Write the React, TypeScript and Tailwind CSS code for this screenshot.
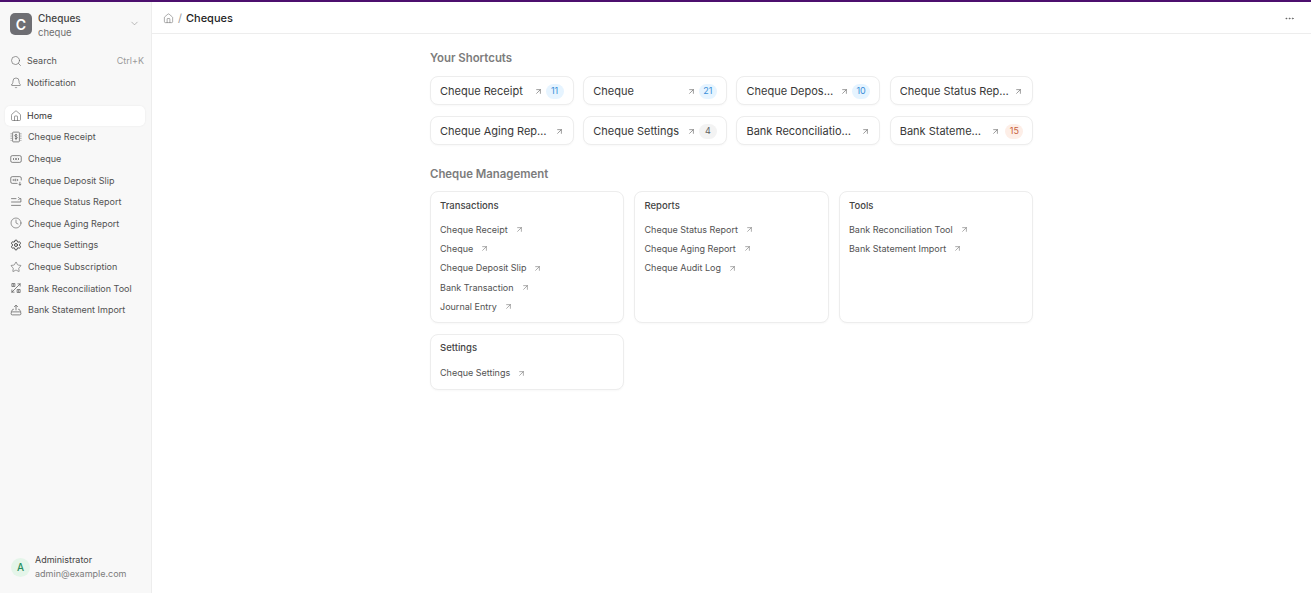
import React from "react";
import { Home, Search, Bell, Clock, Settings, Star, ArrowUpRight, ChevronDown, Ellipsis } from "lucide-react";

const ic = "w-[12px] h-[12px] shrink-0 text-[#5f5f5f]";
const Receipt = () => (
  <svg viewBox="0 0 16 16" fill="none" stroke="currentColor" strokeWidth="1" className={ic}>
    <rect x="3.500" y="1.500" width="9" height="13" rx="1" />
    <path d="M1.500 3v10M14.500 3v10" strokeDasharray="1.500 1.500" />
    <path d="M9.800 5.800C9.500 5.100 8.800 4.800 8 4.800c-1 0-1.700.5-1.700 1.300 0 1.800 3.500 1 3.500 2.800 0 .8-.8 1.300-1.800 1.300-.9 0-1.500-.3-1.800-1M8 3.800v8.400" />
  </svg>
);
const ChequeIcon = () => (
  <svg viewBox="0 0 16 16" fill="none" stroke="currentColor" strokeWidth="1" className={ic}>
    <rect x="1" y="3.500" width="14" height="9" rx="2" />
    <path d="M5.500 6.500 4 8l1.500 1.500M10.500 6.500 12 8l-1.500 1.500" />
    <circle cx="8" cy="8" r="1" />
  </svg>
);
const DepositIcon = () => (
  <svg viewBox="0 0 16 16" fill="none" stroke="currentColor" strokeWidth="1" className={ic}>
    <path d="M10 12.500H3a2 2 0 0 1-2-2v-5a2 2 0 0 1 2-2h10a2 2 0 0 1 2 2v3" />
    <path d="M5 6.500 3.800 8 5 9.500M9.500 6.500 10.700 8 9.500 9.500" />
    <circle cx="7.200" cy="8" r="1" />
    <path d="M13.200 10.500v4.500M11.500 13.200l1.700 1.800 1.700-1.800" />
  </svg>
);
const StatusIcon = () => (
  <svg viewBox="0 0 16 16" fill="none" stroke="currentColor" strokeWidth="1" className={ic}>
    <path d="M1.500 3.500h7M1.500 8h13M1.500 12.500h13" />
    <path d="M11 1.500 13 3.500 11 5.500M13 3.500h1.500V8" />
  </svg>
);
const Recon = () => (
  <svg viewBox="0 0 16 16" fill="none" stroke="currentColor" strokeWidth="1" className={ic}>
    <path d="M2 14 14 2" />
    <path d="M2.500 2 6.500 2 6.500 6 2.500 6Z" />
    <path d="M9.500 10h4v4h-4Z" />
    <path d="M10 2.500h3.500V6M2.500 10v3.500H6" />
    <circle cx="4.500" cy="4" r=".6" />
    <circle cx="11.500" cy="12" r=".6" />
  </svg>
);
const Tray = () => (
  <svg viewBox="0 0 16 16" fill="none" stroke="currentColor" strokeWidth="1" className={ic}>
    <path d="M8 8.500V1.500M5.500 4 8 1.500 10.500 4" />
    <path d="M5 7H3.800L1.500 10.500M11 7h1.200l2.300 3.500" />
    <rect x="1.500" y="10.500" width="13" height="4" rx="1.500" />
  </svg>
);

const nav: [string, React.ReactNode][] = [
  ["Cheque Receipt", <Receipt />],
  ["Cheque", <ChequeIcon />],
  ["Cheque Deposit Slip", <DepositIcon />],
  ["Cheque Status Report", <StatusIcon />],
  ["Cheque Aging Report", <Clock className={ic} strokeWidth={1.25} />],
  ["Cheque Settings", <Settings className="w-[12px] h-[12px] shrink-0 text-[#333]" strokeWidth={1.75} />],
  ["Cheque Subscription", <Star className={ic} strokeWidth={1.25} />],
  ["Bank Reconciliation Tool", <Recon />],
  ["Bank Statement Import", <Tray />],
];

type Badge = { n: string; bg: string; fg: string; ml: string } | null;
const blue = (n: string) => ({ n, bg: "bg-[#e6f4ff]", fg: "text-[#3b8ed8]", ml: "ml-[3px]" });
const shortcuts: [string, Badge, string][] = [
  ["Cheque Receipt", blue("11"), "ml-[6px]"],
  ["Cheque", blue("21"), "ml-[6px]"],
  ["Cheque Deposit Slip", blue("10"), "ml-[6px]"],
  ["Cheque Status Report", null, "ml-[4px]"],
  ["Cheque Aging Report", null, "ml-[6px]"],
  ["Cheque Settings", { n: "4", bg: "bg-[#f3f3f3]", fg: "text-[#5f5f5f]", ml: "ml-[3px]" }, "ml-[6px]"],
  ["Bank Reconciliation Tool", null, "ml-[6px]"],
  ["Bank Statement Import", { n: "15", bg: "bg-[#fdeee7]", fg: "text-[#c8603c]", ml: "ml-[5px]" }, "ml-[6px]"],
];

const cards: [string, string[]][] = [
  ["Transactions", ["Cheque Receipt", "Cheque", "Cheque Deposit Slip", "Bank Transaction", "Journal Entry"]],
  ["Reports", ["Cheque Status Report", "Cheque Aging Report", "Cheque Audit Log"]],
  ["Tools", ["Bank Reconciliation Tool", "Bank Statement Import"]],
  ["Settings", ["Cheque Settings"]],
];

export default function App() {
  return (
    <div className="h-screen w-full flex flex-col overflow-hidden bg-white text-[#383838] font-['Inter',sans-serif]">
      <div className="h-[2px] shrink-0 bg-[#4c0f6e]" />
      <div className="flex flex-1 min-h-0">
        <aside className="w-[152px] shrink-0 flex flex-col bg-[#f8f8f8] border-r border-[#ededed]">
          <div className="flex items-center h-[40px] pl-[10px] pr-[11px] mt-[2px]">
            <div className="w-[22px] h-[22px] rounded-[5px] bg-[#6e6e73] text-white flex items-center justify-center text-[14px] font-semibold">C</div>
            <div className="ml-[6px] pt-[2px] flex-1 min-w-0 flex flex-col gap-[3px]">
              <div className="text-[10px] leading-[12px] font-medium text-[#444]">Cheques</div>
              <div className="text-[9.5px] leading-[12px] text-[#6f6f6f]">cheque</div>
            </div>
            <ChevronDown className="w-[11px] h-[11px] -mt-[1px] text-[#8a8a8a]" strokeWidth={1.25} />
          </div>
          <div className="mt-[7px] px-[10px] flex flex-col gap-[1.5px]">
            <div className="h-[20px] flex items-center gap-[5px] text-[9px] text-[#525252]">
              <Search className={ic} strokeWidth={1.25} />
              <span className="flex-1">Search</span>
              <span className="text-[#9a9a9a] -mr-[3px]">Ctrl+K</span>
            </div>
            <div className="h-[20px] flex items-center gap-[5px] text-[9px] text-[#525252]">
              <Bell className={ic} strokeWidth={1.25} />
              <span>Notification</span>
            </div>
          </div>
          <nav className="mt-[13px] pl-[5px] pr-[6px] flex flex-col gap-[1.6px]">
            <div className="h-[20px] rounded-[5px] bg-white shadow-[0_0_2px_rgba(0,0,0,0.08)] flex items-center gap-[5px] px-[5px] text-[9px] text-[#383838]">
              <Home className={ic} strokeWidth={1.25} />
              <span>Home</span>
            </div>
            {nav.map(([label, icon]) => (
              <div key={label} className="h-[20px] flex items-center gap-[6px] px-[5px] text-[9px] text-[#525252]">
                {icon}
                <span className="whitespace-nowrap">{label}</span>
              </div>
            ))}
          </nav>
          <div className="mt-auto mb-[13px] pl-[11px] flex items-center gap-[5px]">
            <div className="w-[19px] h-[19px] rounded-full bg-[#e4f5e9] text-[#278f5e] flex items-center justify-center text-[10px] font-medium">A</div>
            <div className="flex flex-col gap-[2px]">
              <div className="text-[9px] leading-[12px] text-[#444]">Administrator</div>
              <div className="text-[9px] leading-[12px] text-[#7c7c7c]">admin@example.com</div>
            </div>
          </div>
        </aside>
        <main className="flex-1 min-w-0 flex flex-col">
          <header className="h-[32px] shrink-0 border-b border-[#ededed] flex items-center px-[11px] pt-[2px]">
            <Home className="w-[11px] h-[11px] text-[#6f6f6f]" strokeWidth={1.25} />
            <span className="mx-[4px] text-[11px] text-[#9a9a9a]">/</span>
            <span className="text-[11px] font-medium text-[#1f1f1f]">Cheques</span>
            <Ellipsis className="ml-auto mr-[5px] w-[11px] h-[11px] text-[#525252]" strokeWidth={1.5} />
          </header>
          <div className="w-[603.3px] ml-[278px] pt-[17px]">
            <h2 className="text-[11.4px] leading-[14px] font-semibold text-[#7c7c7c]">Your Shortcuts</h2>
            <div className="mt-[11px] grid grid-cols-4 gap-x-[9.67px] gap-y-[11px]">
              {shortcuts.map(([label, b, arrowMl]) => (
                <div key={label} className="h-[29px] rounded-[8px] border border-[#ededed] bg-white shadow-[0_1px_2px_rgba(0,0,0,0.03)] flex items-center pl-[9px] pr-[9px] pt-[1px]">
                  <span className="flex-1 min-w-0 truncate text-[11px] leading-[16px] text-[#383838]">{label}</span>
                  <ArrowUpRight className={`${arrowMl} shrink-0 w-[9px] h-[9px] text-[#525252]`} strokeWidth={1.5} />
                  {b && <span className={`${b.ml} shrink-0 min-w-[18px] h-[15px] px-[4px] rounded-full flex items-center justify-center text-[9px] ${b.bg} ${b.fg}`}>{b.n}</span>}
                </div>
              ))}
            </div>
            <h2 className="mt-[22px] text-[11.4px] leading-[14px] font-semibold text-[#7c7c7c]">Cheque Management</h2>
            <div className="mt-[10px] grid grid-cols-3 gap-x-[10.2px] gap-y-[10.5px]">
              {cards.map(([title, links]) => (
                <div key={title} className={`rounded-[8px] border border-[#ededed] bg-white shadow-[0_1px_2px_rgba(0,0,0,0.03)] px-[9px] pt-[7.5px] ${title === "Settings" ? "pb-[9px]" : "pb-[8.5px]"}`}>
                  <div className="text-[9.5px] leading-[12px] font-medium text-[#444]">{title}</div>
                  <div className={`${title === "Settings" ? "mt-[12px]" : "mt-[11px]"} flex flex-col gap-[5.25px]`}>
                    {links.map((l) => (
                      <div key={l} className="h-[14px] flex items-center text-[9px] text-[#525252]">
                        <span className="whitespace-nowrap">{l}</span>
                        <ArrowUpRight className="ml-[7px] w-[9px] h-[9px] text-[#525252]" strokeWidth={1.25} />
                      </div>
                    ))}
                  </div>
                </div>
              ))}
            </div>
          </div>
        </main>
      </div>
    </div>
  );
}
